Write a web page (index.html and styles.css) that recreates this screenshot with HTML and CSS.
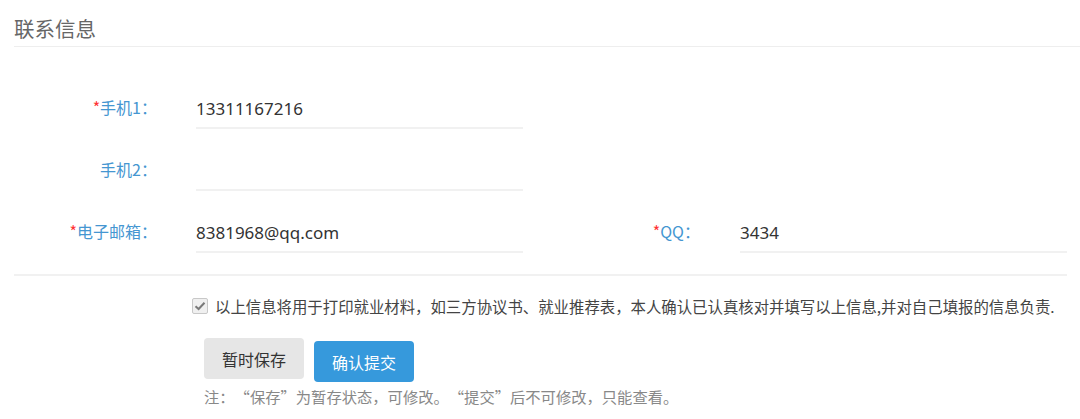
FILE: index.html
```html
<!DOCTYPE html>
<html>
<head>
    <meta charset="utf-8">
    <title>联系信息</title>
    <link rel="stylesheet" href="styles.css">
</head>
<body>

<div class="page">

    <!-- TITLE -->
    <h2 class="section-title">联系信息</h2>

    <!-- FIELDS -->
    <div class="form-grid">
        <label class="label"><span class="req">*</span>手机1：</label>
        <input class="value" value="13311167216" readonly>
        <div></div>
        <div></div>

        <label class="label">手机2：</label>
        <input class="value" value="" readonly>
        <div></div>
        <div></div>

        <label class="label"><span class="req">*</span>电子邮箱：</label>
        <input class="value" value="8381968@qq.com" readonly>
        <label class="label label-right"><span class="req">*</span>QQ：</label>
        <input class="value" value="3434" readonly>
    </div>

    <div class="divider"></div>

    <!-- CONFIRM -->
    <div class="consent">
        <span class="checkbox">
            <svg width="12" height="10" viewBox="0 0 12 10">
                <path d="M1.5 5.2 L4.6 8 L10.5 1.8" fill="none" stroke="#7a7a7a" stroke-width="2"/>
            </svg>
        </span>
        <span class="consent-text">以上信息将用于打印就业材料，如三方协议书、就业推荐表，本人确认已认真核对并填写以上信息,并对自己填报的信息负责.</span>
    </div>

    <div class="actions">
        <button class="btn btn-save">暂时保存</button>
        <button class="btn btn-submit">确认提交</button>
    </div>

    <p class="note">注：<span class="q-open">“</span>保存<span class="q-close">”</span>为暂存状态，可修改。<span class="q-open">“</span>提交<span class="q-close">”</span>后不可修改，只能查看。</p>

</div>

</body>
</html>
```

FILE: styles.css
```css
body {
    margin: 0;
    background: #fff;
    font-family: "Noto Sans CJK SC", sans-serif;
    color: #333;
}

.page {
    padding-left: 14px;
}

.section-title {
    margin: 0;
    padding: 13px 0 3px;
    line-height: 30px;
    font-size: 20.5px;
    font-weight: normal;
    color: #666;
    border-bottom: 1px solid #eee;
}

.form-grid {
    display: grid;
    grid-template-columns: 182px 327px 217px 327px;
    row-gap: 23px;
    padding-top: 43px;
}

.label {
    padding-right: 39px;
    text-align: right;
    line-height: 35px;
    font-size: 16px;
    color: #4596d1;
}

.label-right {
    padding-right: 40px;
}

.req {
    color: #f33;
}

.value {
    box-sizing: border-box;
    height: 39px;
    padding: 0 0 1px;
    border: none;
    border-bottom: 2px solid #f1f1f1;
    outline: none;
    font-family: "Noto Sans", "Noto Sans CJK SC", sans-serif;
    font-size: 17px;
    color: #333;
    background: transparent;
}

.divider {
    width: 1053px;
    margin-top: 21px;
    border-top: 2px solid #f1f1f1;
}

.consent {
    display: flex;
    align-items: center;
    gap: 7px;
    margin: 21px 0 0 178px;
}

.checkbox {
    box-sizing: border-box;
    width: 16px;
    height: 16px;
    display: flex;
    align-items: center;
    justify-content: center;
    border: 1px solid #c8c8c8;
    border-radius: 2px;
    background: #f0f0f0;
}

.consent-text {
    font-size: 15.4px;
    line-height: 18px;
    color: #444;
}

.actions {
    display: flex;
    align-items: flex-start;
    gap: 10px;
    margin: 23px 0 0 190px;
}

.btn {
    width: 100px;
    height: 41px;
    border: none;
    border-radius: 4px;
    font-family: "Noto Sans CJK SC", sans-serif;
    font-size: 16px;
    cursor: pointer;
}

.btn-save {
    background: #e6e6e6;
    color: #333;
}

.btn-submit {
    margin-top: 3px;
    background: #3699dc;
    color: #fff;
}

.note {
    margin: 5px 0 0 190px;
    font-size: 15.3px;
    line-height: 18px;
    color: #888;
}

.q-open,
.q-close {
    display: inline-block;
    width: 1em;
}

.q-open {
    text-align: right;
}

.q-close {
    text-align: left;
}

.q-open + .q-open,
.q-close + .q-open {
    margin-left: 0;
}
```
